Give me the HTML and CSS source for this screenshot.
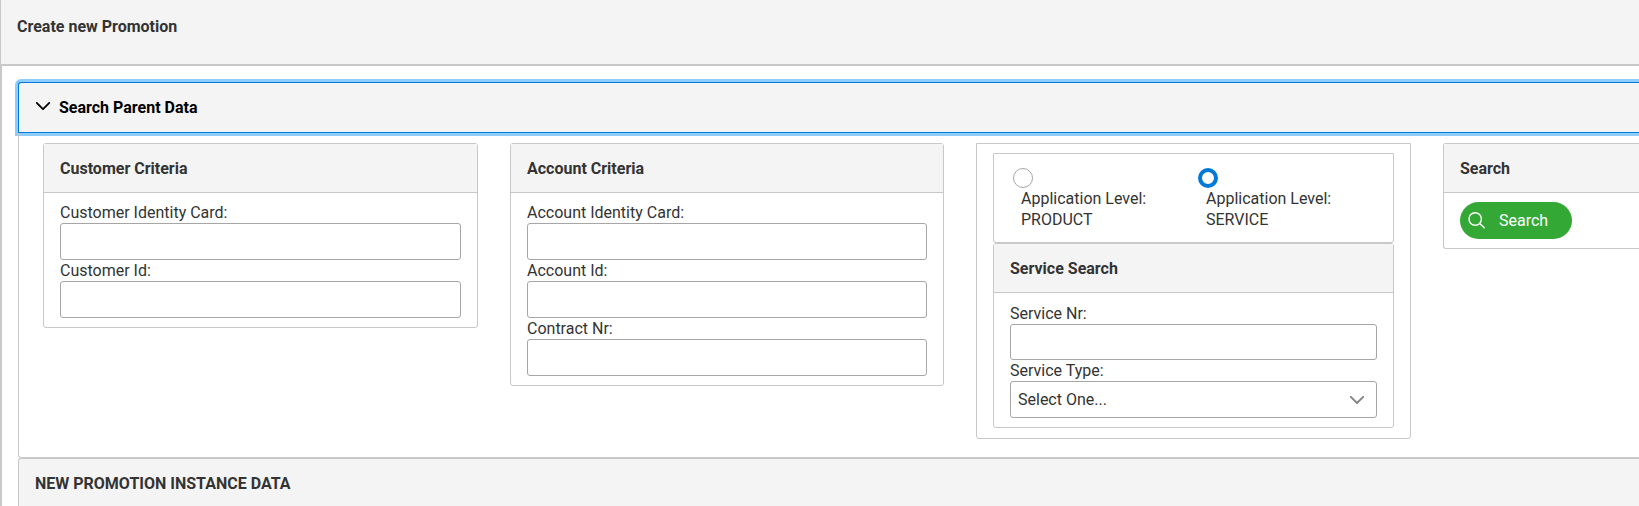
FILE: index.html
```html
<!DOCTYPE html>
<html lang="en">
<head>
<meta charset="utf-8">
<title>Create new Promotion</title>
<link rel="stylesheet" href="styles.css">
</head>
<body>
<header class="page-header">Create new Promotion</header>
<main class="page-body">
  <div class="tab-header tab-active">
    <svg class="tab-icon" width="14" height="9" viewBox="0 0 14 9"><path d="M.7.9 7 7.2 13.3.9" fill="none" stroke="#000" stroke-width="1.8" stroke-linecap="round" stroke-linejoin="round"/></svg>
    <span>Search Parent Data</span>
  </div>
  <section class="tab-content">
    <div class="panel">
      <h2 class="panel-title">Customer Criteria</h2>
      <div class="panel-body">
        <label class="field">Customer Identity Card:<input class="input" type="text"></label>
        <label class="field">Customer Id:<input class="input" type="text"></label>
      </div>
    </div>
    <div class="panel">
      <h2 class="panel-title">Account Criteria</h2>
      <div class="panel-body">
        <label class="field">Account Identity Card:<input class="input" type="text"></label>
        <label class="field">Account Id:<input class="input" type="text"></label>
        <label class="field">Contract Nr:<input class="input" type="text"></label>
      </div>
    </div>
    <div class="panel panel-plain panel-group">
      <div class="panel panel-plain levels">
        <div class="level"><span class="radio"></span><span class="level-label">Application Level: PRODUCT</span></div>
        <div class="level"><span class="radio radio-on"></span><span class="level-label">Application Level: SERVICE</span></div>
      </div>
      <div class="panel">
        <h2 class="panel-title">Service Search</h2>
        <div class="panel-body panel-body-service">
          <label class="field">Service Nr:<input class="input input-short" type="text"></label>
          <div class="field">Service Type:
            <div class="input select"><span>Select One...</span>
              <svg width="14" height="8" viewBox="0 0 14 8"><path d="M.8.8 7 7 13.2.8" fill="none" stroke="#848484" stroke-width="1.9" stroke-linecap="round" stroke-linejoin="round"/></svg>
            </div>
          </div>
        </div>
      </div>
    </div>
    <div class="panel panel-last">
      <h2 class="panel-title">Search</h2>
      <div class="panel-body">
        <button class="button"><svg width="17" height="17" viewBox="0 0 17 17"><g fill="none" stroke="#fff" stroke-width="1.4" stroke-linecap="round"><circle cx="7.2" cy="7" r="6.2"/><path d="m11.7 11.5 4.5 4.3"/></g></svg><span>Search</span></button>
      </div>
    </div>
  </section>
  <div class="tab-header">NEW PROMOTION INSTANCE DATA</div>
</main>
</body>
</html>
```
FILE: styles.css
```css
* {
  box-sizing: border-box;
}

body {
  margin: 0;
  height: 506px;
  overflow: hidden;
  display: flex;
  flex-direction: column;
  background: #fff;
  color: #333;
  font: 16px/21px Roboto, sans-serif;
}

.page-header {
  flex: none;
  height: 66px;
  padding: 16px;
  background: #f4f4f4;
  border-left: 1px solid #c8c8c8;
  border-bottom: 2px solid #c8c8c8;
  font-weight: 700;
}

.page-body {
  flex: 1;
  min-height: 0;
  padding: 16px 0 0 16px;
  border-left: 2px solid #c8c8c8;
}

.tab-header {
  height: 51px;
  display: flex;
  align-items: center;
  padding: 0 16px;
  border: 1px solid #c8c8c8;
  border-right: 0;
  border-radius: 3px 0 0 0;
  background: #f4f4f4;
  font-weight: 700;
}

.tab-active {
  border-color: #007ad9;
  box-shadow: 0 0 0 3px #8dcdff;
  color: #000;
}

.tab-icon {
  margin: -2px 9px 0 1px;
}

.tab-content {
  height: 325px;
  display: grid;
  grid-template-columns: 435px 434px 435px 1fr;
  column-gap: 32px;
  align-items: start;
  padding: 10px 0 0 24px;
  border: 1px solid #c8c8c8;
  border-top: 0;
  border-right: 0;
  border-radius: 0 0 0 3px;
}

.panel {
  border: 1px solid #c8c8c8;
  border-radius: 3px;
}

.panel-plain {
  border-radius: 0 0 3px 3px;
}

.panel-last {
  border-right: 0;
  border-radius: 3px 0 0 3px;
}

.panel-title {
  height: 49px;
  margin: 0;
  padding: 14px 16px;
  background: #f4f4f4;
  border-bottom: 1px solid #c8c8c8;
  font-size: 16px;
  font-weight: 700;
}

.panel-body {
  padding: 9px 16px;
}

.panel-body-service {
  padding-top: 10px;
}

.panel-group {
  padding: 9px 16px 10px;
}

.field {
  display: block;
}

.input {
  display: block;
  width: 100%;
  height: 37px;
  padding: 0 7px;
  background: #fff;
  border: 1px solid #a6a6a6;
  border-radius: 3px;
}

.input-short {
  height: 36px;
}

.select {
  display: flex;
  align-items: center;
  justify-content: space-between;
  padding-right: 12px;
}

.levels {
  height: 90px;
  display: flex;
  padding: 14px 0 14px 19px;
}

.level {
  flex: none;
  width: 185px;
}

.radio {
  display: block;
  width: 20px;
  height: 20px;
  border: 1px solid #a6a6a6;
  border-radius: 50%;
}

.radio-on {
  border: 4px solid #007ad9;
}

.level-label {
  display: block;
  width: 150px;
  padding-left: 8px;
}

.button {
  display: flex;
  align-items: center;
  width: 112px;
  height: 37px;
  margin: 0;
  padding: 0 8px;
  gap: 14px;
  background: #34a835;
  border: 0;
  border-radius: 19px;
  color: #fff;
  font: inherit;
}
```
